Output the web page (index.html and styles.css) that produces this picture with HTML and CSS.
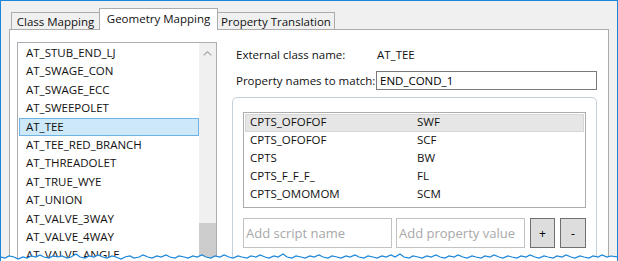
FILE: index.html
```html
<!DOCTYPE html>
<html lang="en">
<head>
    <meta charset="UTF-8">
    <title>Geometry Mapping</title>
    <link rel="stylesheet" href="styles.css">
</head>
<body>

<div class="window">
    <div class="tabs">
        <div class="tab tab-class">Class Mapping</div>
        <div class="tab tab-active">Geometry Mapping</div>
        <div class="tab tab-prop">Property Translation</div>
    </div>

    <div class="panel">
        <div class="class-list">
            <ul class="items">
                <li>AT_STUB_END_LJ</li>
                <li>AT_SWAGE_CON</li>
                <li>AT_SWAGE_ECC</li>
                <li>AT_SWEEPOLET</li>
                <li class="selected">AT_TEE</li>
                <li>AT_TEE_RED_BRANCH</li>
                <li>AT_THREADOLET</li>
                <li>AT_TRUE_WYE</li>
                <li>AT_UNION</li>
                <li>AT_VALVE_3WAY</li>
                <li>AT_VALVE_4WAY</li>
                <li>AT_VALVE_ANGLE</li>
            </ul>
            <div class="scrollbar">
                <svg class="arrow" width="9" height="5" viewBox="0 0 9 5">
                    <polyline points="0.5,4.5 4.5,0.8 8.5,4.5" fill="none" stroke="#a3a3a3" stroke-width="1.1"/>
                </svg>
                <div class="thumb"></div>
            </div>
        </div>

        <div class="details">
            <div class="field">
                <span class="label">External class name:</span>
                <span class="value">AT_TEE</span>
            </div>
            <div class="field">
                <span class="label">Property names to match:</span>
                <input class="text-input" type="text" value="END_COND_1">
            </div>

            <div class="group">
                <div class="map-list">
                    <div class="map-row current"><span class="col-name">CPTS_OFOFOF</span><span>SWF</span></div>
                    <div class="map-row"><span class="col-name">CPTS_OFOFOF</span><span>SCF</span></div>
                    <div class="map-row"><span class="col-name">CPTS</span><span>BW</span></div>
                    <div class="map-row"><span class="col-name">CPTS_F_F_F_</span><span>FL</span></div>
                    <div class="map-row"><span class="col-name">CPTS_OMOMOM</span><span>SCM</span></div>
                </div>
                <div class="add-row">
                    <input class="add-input script-name" type="text" placeholder="Add script name">
                    <input class="add-input prop-value" type="text" placeholder="Add property value">
                    <button class="small-btn">+</button>
                    <button class="small-btn btn-minus">-</button>
                </div>
            </div>
        </div>
    </div>

    <svg class="torn" width="618" height="12" viewBox="0 0 618 12">
        <path d="M0,6 L5,7 L9,5 L14,6 L18,8 L23,6 L27,7 L31,5 L36,6 L40,4 L44,6 L49,7 L53,5 L58,6 L62,5 L67,7 L71,6 L76,3 L80,6 L85,7 L89,5 L94,6 L98,4 L103,6 L107,7 L112,5 L116,6 L121,8 L125,6 L130,5 L134,7 L139,6 L143,4 L148,6 L152,7 L157,5 L161,6 L166,4 L170,6 L175,7 L179,5 L184,6 L188,7 L193,5 L197,6 L202,4 L206,6 L211,7 L215,5 L220,6 L224,4 L229,6 L233,7 L238,5 L242,6 L247,7 L251,5 L256,6 L260,4 L265,6 L269,7 L274,5 L278,6 L283,3 L287,6 L292,7 L296,5 L301,6 L305,7 L310,5 L314,6 L319,4 L323,6 L328,7 L332,5 L337,6 L341,7 L346,5 L350,6 L355,4 L359,6 L364,7 L368,5 L373,6 L377,7 L382,5 L386,6 L391,4 L395,6 L400,3 L404,6 L409,7 L413,5 L418,6 L422,7 L427,5 L431,6 L436,4 L440,6 L445,7 L449,5 L454,6 L458,4 L463,6 L467,7 L472,5 L476,6 L481,7 L485,5 L490,6 L494,4 L499,6 L503,7 L508,5 L512,6 L517,7 L521,5 L526,6 L530,4 L535,6 L539,7 L544,5 L548,6 L553,7 L557,5 L562,6 L566,4 L571,6 L575,7 L580,5 L584,6 L589,7 L593,5 L598,6 L602,4 L607,6 L611,5 L618,6 L618,12 L0,12 Z" fill="#ffffff" stroke="none"/>
        <path d="M0,6 L5,7 L9,5 L14,6 L18,8 L23,6 L27,7 L31,5 L36,6 L40,4 L44,6 L49,7 L53,5 L58,6 L62,5 L67,7 L71,6 L76,3 L80,6 L85,7 L89,5 L94,6 L98,4 L103,6 L107,7 L112,5 L116,6 L121,8 L125,6 L130,5 L134,7 L139,6 L143,4 L148,6 L152,7 L157,5 L161,6 L166,4 L170,6 L175,7 L179,5 L184,6 L188,7 L193,5 L197,6 L202,4 L206,6 L211,7 L215,5 L220,6 L224,4 L229,6 L233,7 L238,5 L242,6 L247,7 L251,5 L256,6 L260,4 L265,6 L269,7 L274,5 L278,6 L283,3 L287,6 L292,7 L296,5 L301,6 L305,7 L310,5 L314,6 L319,4 L323,6 L328,7 L332,5 L337,6 L341,7 L346,5 L350,6 L355,4 L359,6 L364,7 L368,5 L373,6 L377,7 L382,5 L386,6 L391,4 L395,6 L400,3 L404,6 L409,7 L413,5 L418,6 L422,7 L427,5 L431,6 L436,4 L440,6 L445,7 L449,5 L454,6 L458,4 L463,6 L467,7 L472,5 L476,6 L481,7 L485,5 L490,6 L494,4 L499,6 L503,7 L508,5 L512,6 L517,7 L521,5 L526,6 L530,4 L535,6 L539,7 L544,5 L548,6 L553,7 L557,5 L562,6 L566,4 L571,6 L575,7 L580,5 L584,6 L589,7 L593,5 L598,6 L602,4 L607,6 L611,5 L618,6" fill="none" stroke="#1a86d9" stroke-width="1.2"/>
    </svg>
</div>

</body>
</html>
```

FILE: styles.css
```css
body {
    margin: 0;
    font-family: "Open Sans", "Noto Sans", sans-serif;
    font-size: 11.5px;
    color: #111111;
}

.window {
    position: relative;
    width: 616px;
    height: 260px;
    border: 1px solid #1a86d9;
    border-bottom: none;
    background: #f0f0f0;
    overflow: hidden;
}

/* tab strip */
.tabs {
    display: flex;
    align-items: flex-end;
    height: 20px;
    margin-top: 8px;
    padding-left: 10px;
}

.tab {
    box-sizing: border-box;
    height: 17px;
    border: 1px solid #acacac;
    border-bottom: none;
    background: #f0f0f0;
    text-align: center;
    line-height: 18px;
}

.tab-class {
    width: 88px;
    border-right: none;
}

.tab-prop {
    width: 117px;
    border-left: none;
}

.tab-active {
    position: relative;
    z-index: 1;
    width: 119px;
    height: 22px;
    margin-bottom: -1px;
    background: #ffffff;
    line-height: 19px;
}

.panel {
    display: flex;
    box-sizing: border-box;
    width: 600px;
    height: 240px;
    margin-left: 8px;
    padding: 12px 0 0 7px;
    border: 1px solid #acacac;
    background: #ffffff;
}

/* class list on the left */
.class-list {
    display: flex;
    box-sizing: border-box;
    width: 200px;
    height: 240px;
    border: 1px solid #abadb3;
}

.items {
    flex: 1;
    list-style: none;
    margin: 0;
    padding: 1px 0 0;
}

.items li {
    box-sizing: border-box;
    height: 18.4px;
    margin-left: 1px;
    padding-left: 6px;
    border: 1px solid transparent;
    line-height: 16.4px;
}

.items li.selected {
    background: #cde8f8;
    border-color: #6fb2e4;
}

.scrollbar {
    display: flex;
    flex-direction: column;
    align-items: center;
    width: 17px;
    background: #f0f0f0;
}

.arrow {
    margin-top: 8px;
}

.thumb {
    width: 17px;
    height: 60px;
    margin-top: 167px;
    background: #cdcdcd;
}

/* right side */
.details {
    width: 365px;
    margin-left: 15px;
    padding-top: 3px;
}

.field {
    display: flex;
    align-items: center;
    height: 19px;
    margin-bottom: 7px;
    padding-left: 4px;
}

.label {
    width: 140px;
}

.value {
    padding-left: 1px;
}

.text-input {
    box-sizing: border-box;
    width: 221px;
    height: 19px;
    padding: 0 3px;
    border: 1px solid #7a7a7a;
    font: inherit;
    color: #000000;
    outline: none;
}

.group {
    box-sizing: border-box;
    height: 170px;
    margin-top: 4px;
    padding: 14px 10px 0 10px;
    border: 1px solid #c4d0dc;
    border-radius: 5px;
}

.map-list {
    box-sizing: border-box;
    height: 96px;
    padding: 1px;
    border: 1px solid #acacac;
}

.map-row {
    box-sizing: border-box;
    display: flex;
    height: 17.9px;
    padding-left: 4px;
    border: 1px solid transparent;
    line-height: 14px;
}

.map-row.current {
    background: #e6e6e6;
    border-color: #d6d6d6;
}

.col-name {
    width: 167px;
}

.add-row {
    display: flex;
    gap: 5px;
    margin-top: 10px;
}

.add-input {
    box-sizing: border-box;
    height: 30px;
    padding: 0 2px;
    border: 1px solid #c2c2c2;
    font-family: inherit;
    font-size: 13px;
    outline: none;
}

.add-input::placeholder {
    color: #a8a8a8;
}

.script-name {
    width: 149px;
    margin-right: -1px;
}

.prop-value {
    width: 129px;
}

.small-btn {
    box-sizing: border-box;
    width: 25px;
    height: 30px;
    padding: 0;
    border: 1px solid #707070;
    background: #dddddd;
    font-family: inherit;
    font-size: 12px;
    color: #000000;
}

.btn-minus {
    width: 26px;
}

.torn {
    position: absolute;
    left: -1px;
    bottom: -2px;
}
```
